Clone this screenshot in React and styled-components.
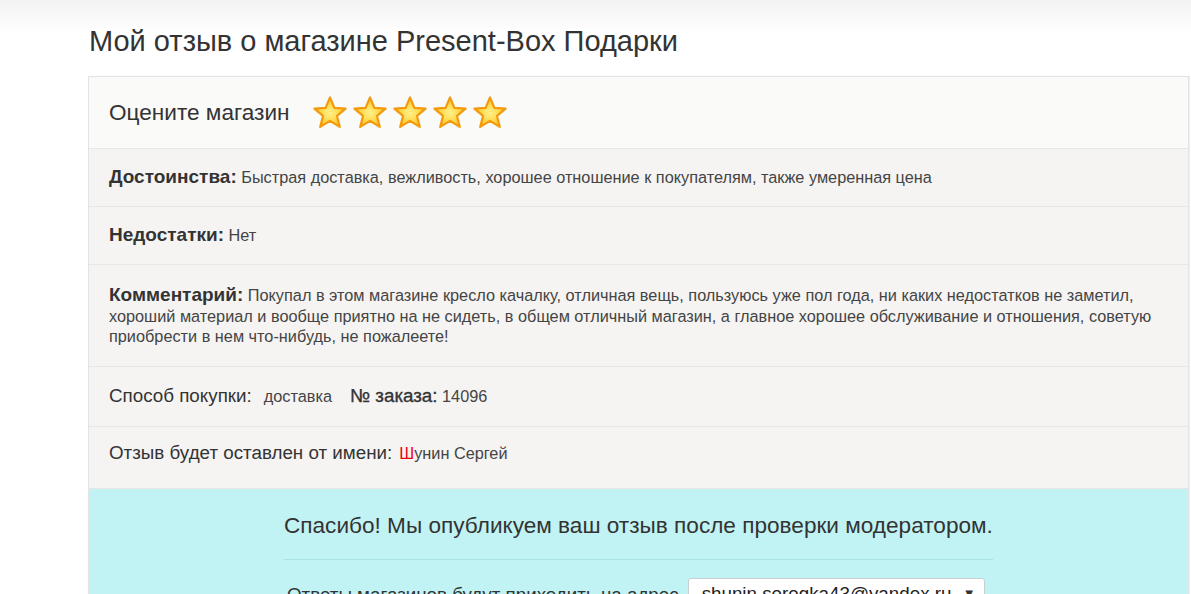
import React from 'react';
import styled, { createGlobalStyle } from 'styled-components';

const GlobalStyle = createGlobalStyle`
  html, body {
    margin: 0;
    padding: 0;
    background: #fff;
  }
  body {
    font-family: "Liberation Sans", Arial, sans-serif;
    color: #333;
    overflow: hidden;
  }
`;

const Page = styled.div`
  min-height: 594px;
  background: linear-gradient(to bottom, #f3f3f3 0, #ffffff 34px, #ffffff 100%);
`;

const Wrap = styled.div`
  margin-left: 88px;
  width: 1101px;
`;

const Title = styled.h1`
  margin: 0;
  padding: 24px 0 0 1px;
  height: 76px;
  box-sizing: border-box;
  font-size: 29px;
  line-height: 34px;
  font-weight: normal;
  color: #333;
`;

const Card = styled.div`
  border: 1px solid #e3e3e3;
  border-bottom: none;
  box-shadow: 1px 0 1px rgba(0, 0, 0, 0.06);
`;

const Head = styled.div`
  display: flex;
  align-items: center;
  height: 71px;
  padding: 0 20px;
  background: #fafaf9;
  border-bottom: 1px solid #e8e7e6;
`;

const HeadLabel = styled.span`
  font-size: 22.6px;
  color: #333;
  margin-right: 23px;
`;

const Stars = styled.div`
  display: flex;
  gap: 4px;
`;

const Row = styled.div`
  background: #f5f4f3;
  border-bottom: 1px solid #e8e7e6;
  padding: ${(p) => p.$pad || '18px 20px 19px'};
  font-size: 16.3px;
  line-height: ${(p) => p.$lh || '20px'};
  color: #444;
`;

const Bold = styled.b`
  font-size: 19px;
  font-weight: bold;
  color: #333;
`;

const Label = styled.span`
  font-size: 18.8px;
  color: #333;
  margin-right: ${(p) => p.$gap || '0'};
`;

const Value = styled.span`
  color: #444;
  margin-right: ${(p) => p.$gap || '0'};
`;

const Num = styled.span`
  font-size: 18.8px;
  color: #333;
  -webkit-text-stroke: 0.35px #333;
`;

const Red = styled.span`
  color: #f00010;
`;

const Notice = styled.div`
  background: #c2f3f4;
  padding: 24px 0 40px;
  display: flex;
  justify-content: center;
`;

const NoticeInner = styled.div`
  width: 709px;
`;

const NoticeTitle = styled.div`
  font-size: 22.6px;
  line-height: 26px;
  color: #333;
  padding-bottom: 20px;
  border-bottom: 1px solid #a8e2e4;
`;

const AddrRow = styled.div`
  display: flex;
  align-items: flex-start;
  margin-top: 18px;
  padding-left: 3px;
  font-size: 18.8px;
  color: #333;
`;

const AddrText = styled.span`
  margin-top: 6px;
  margin-right: 9px;
  white-space: nowrap;
`;

const Select = styled.div`
  display: flex;
  align-items: center;
  justify-content: space-between;
  flex: none;
  width: 297px;
  height: 32px;
  box-sizing: border-box;
  padding: 0 8px 0 13px;
  background: #fff;
  border: 1px solid #c9cfd0;
  border-radius: 3px;
  font-size: 18.8px;
  color: #222;
  white-space: nowrap;
`;

const Arrow = styled.span`
  font-size: 13px;
  color: #333;
`;

const Star = ({ id }) => (
  <svg width="36" height="36" viewBox="0 0 36 36">
    <defs>
      <radialGradient id={id} cx="50%" cy="52%" r="55%">
        <stop offset="0%" stopColor="#fff28a" />
        <stop offset="55%" stopColor="#ffd84a" />
        <stop offset="100%" stopColor="#ffb21a" />
      </radialGradient>
    </defs>
    <path
      d="M18 2.5 L22.4 12.9 L33.6 13.6 L25 20.9 L27.8 31.9 L18 25.9 L8.2 31.9 L11 20.9 L2.4 13.6 L13.6 12.9 Z"
      fill={`url(#${id})`}
      stroke="#f39a0f"
      strokeWidth="2.2"
      strokeLinejoin="round"
    />
  </svg>
);

const App = () => {
  return (
    <Page>
      <GlobalStyle />
      <Wrap>
        <Title>Мой отзыв о магазине Present-Box Подарки</Title>
        <Card>
          <Head>
            <HeadLabel>Оцените магазин</HeadLabel>
            <Stars>
              {[0, 1, 2, 3, 4].map((i) => (
                <Star key={i} id={`st${i}`} />
              ))}
            </Stars>
          </Head>
          <Row>
            <Bold>Достоинства:</Bold> Быстрая доставка, вежливость, хорошее отношение к покупателям, также умеренная цена
          </Row>
          <Row>
            <Bold>Недостатки:</Bold> Нет
          </Row>
          <Row $pad="20px 20px 19px" $lh="20.5px">
            <Bold>Комментарий:</Bold> Покупал в этом магазине кресло качалку, отличная вещь, пользуюсь уже пол года, ни каких недостатков не заметил, хороший материал и вообще приятно на не сидеть, в общем отличный магазин, а главное хорошее обслуживание и отношения, советую приобрести в нем что-нибудь, не пожалеете!
          </Row>
          <Row $pad="19px 20px 20px">
            <Label $gap="12px">Способ покупки:</Label>
            <Value $gap="18px">доставка</Value>
            <Num>№ заказа:</Num> 14096
          </Row>
          <Row $pad="16px 20px 25px">
            <Label $gap="7px">Отзыв будет оставлен от имени:</Label>
            <Value>
              <Red>Ш</Red>унин Сергей
            </Value>
          </Row>
          <Notice>
            <NoticeInner>
              <NoticeTitle>Спасибо! Мы опубликуем ваш отзыв после проверки модератором.</NoticeTitle>
              <AddrRow>
                <AddrText>Ответы магазинов будут приходить на адрес</AddrText>
                <Select>
                  <span>shunin.seregka43@yandex.ru</span>
                  <Arrow>▼</Arrow>
                </Select>
              </AddrRow>
            </NoticeInner>
          </Notice>
        </Card>
      </Wrap>
    </Page>
  );
};

export default App;
